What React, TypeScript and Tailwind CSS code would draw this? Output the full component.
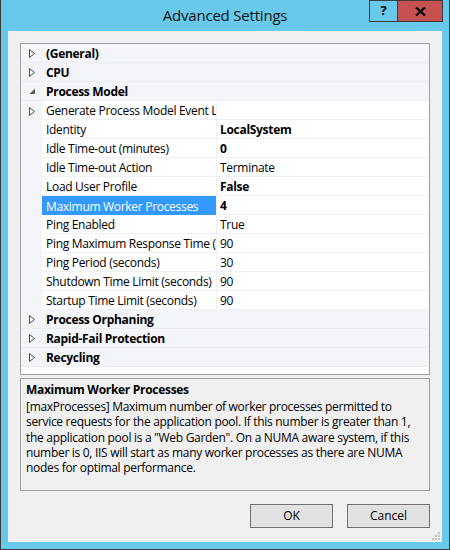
const FONT = { fontFamily: '"Open Sans", "Noto Sans", sans-serif' }

type Row =
  | { kind: 'cat'; label: string; open?: boolean }
  | { kind: 'prop'; label: string; value: string; bold?: boolean; selected?: boolean; expander?: boolean }

const ROWS: Row[] = [
  { kind: 'cat', label: '(General)' },
  { kind: 'cat', label: 'CPU' },
  { kind: 'cat', label: 'Process Model', open: true },
  { kind: 'prop', label: 'Generate Process Model Event Log Entry', value: '', expander: true },
  { kind: 'prop', label: 'Identity', value: 'LocalSystem', bold: true },
  { kind: 'prop', label: 'Idle Time-out (minutes)', value: '0', bold: true },
  { kind: 'prop', label: 'Idle Time-out Action', value: 'Terminate' },
  { kind: 'prop', label: 'Load User Profile', value: 'False', bold: true },
  { kind: 'prop', label: 'Maximum Worker Processes', value: '4', bold: true, selected: true },
  { kind: 'prop', label: 'Ping Enabled', value: 'True' },
  { kind: 'prop', label: 'Ping Maximum Response Time (seconds)', value: '90' },
  { kind: 'prop', label: 'Ping Period (seconds)', value: '30' },
  { kind: 'prop', label: 'Shutdown Time Limit (seconds)', value: '90' },
  { kind: 'prop', label: 'Startup Time Limit (seconds)', value: '90' },
  { kind: 'cat', label: 'Process Orphaning' },
  { kind: 'cat', label: 'Rapid-Fail Protection' },
  { kind: 'cat', label: 'Recycling' },
]

function Collapsed() {
  return (
    <svg width="6" height="9" viewBox="0 0 6 9">
      <path d="M0.5 0.5 L5.5 4.5 L0.5 8.5 Z" fill="none" stroke="#4a4a4a" strokeWidth="1" />
    </svg>
  )
}

function Expanded() {
  return (
    <svg width="7" height="7" viewBox="0 0 7 7">
      <path d="M6 0.5 L6 6 L0.5 6 Z" fill="#5a5a5a" />
    </svg>
  )
}

function GridRow({ row }: { row: Row }) {
  if (row.kind === 'cat') {
    return (
      <div className="flex h-[19px] border-b border-[#eaedf2] bg-[#f3f5f9]">
        <div className="w-[21px] flex items-center justify-center pl-[1px] pt-[1px]">
          {row.open ? <Expanded /> : <Collapsed />}
        </div>
        <div className="pl-[4px] pt-[2px] flex items-center text-[12px] font-bold text-black leading-none tracking-[-0.3px]">
          {row.label}
        </div>
      </div>
    )
  }
  return (
    <div className="flex h-[19px]">
      <div className="w-[21px] shrink-0 bg-[#f3f5f9] flex items-center justify-center pl-[1px] pt-[1px]">
        {row.expander && <Collapsed />}
      </div>
      <div
        className={
          row.selected
            ? 'w-[174px] shrink-0 overflow-hidden whitespace-nowrap bg-[#3399ff] text-white pl-[4px] pt-[2px] flex items-center text-[12px] leading-none tracking-[-0.3px]'
            : 'w-[174px] shrink-0 overflow-hidden whitespace-nowrap bg-white text-black border-b border-[#eef1f6] pl-[4px] pt-[2px] flex items-center text-[12px] leading-none tracking-[-0.3px]'
        }
      >
        {row.label}
      </div>
      <div className="w-[1px] shrink-0 bg-[#eef1f6]" />
      <div
        className={
          row.bold
            ? 'flex-1 bg-white border-b border-[#eef1f6] pl-[3px] pt-[2px] flex items-center text-[12px] font-bold text-black leading-none tracking-[-0.3px]'
            : 'flex-1 bg-white border-b border-[#eef1f6] pl-[3px] pt-[2px] flex items-center text-[12px] text-black leading-none tracking-[-0.3px]'
        }
      >
        {row.value}
      </div>
    </div>
  )
}

export default function App() {
  return (
    <div style={FONT} className="w-[450px] h-[550px] bg-[#68c9ea] border-x border-b border-[#3a3a3a] flex flex-col relative">
      {/* Title bar */}
      <div className="h-[31px] shrink-0 flex items-center justify-center">
        <span className="text-[15px] text-[#111] tracking-[-0.2px]">Advanced Settings</span>
      </div>
      <div className="absolute top-0 right-[6px] flex h-[22px]">
        <div className="w-[29px] border border-[#3c3c3c] flex items-center justify-center text-[13px] font-bold text-black">?</div>
        <div className="w-[46px] -ml-[1px] border border-[#3c3c3c] bg-[#c75050] flex items-center justify-center">
          <svg width="11" height="9" viewBox="0 0 11 9">
            <path d="M1 0.5 L10 8.5 M10 0.5 L1 8.5" stroke="#000" strokeWidth="2.2" />
          </svg>
        </div>
      </div>

      {/* Client area */}
      <div className="mx-[7px] mb-[7px] flex-1 bg-[#f0f0f0] flex flex-col px-[12px] pt-[12px] relative">
        <div className="h-[332px] border border-[#a0a0a0] bg-white flex flex-col">
          {ROWS.map((r, i) => (
            <GridRow key={i} row={r} />
          ))}
        </div>

        <div className="mt-[3px] h-[113px] border border-[#a0a0a0] bg-[#f0f0f0] pl-[5px] pr-[4px] pt-[2px]">
          <div className="text-[12px] font-bold text-black leading-[18px] tracking-[-0.3px]">Maximum Worker Processes</div>
          <p className="text-[12px] text-black leading-[15.3px] tracking-[-0.3px]">
            [maxProcesses] Maximum number of worker processes permitted to service requests for the application pool. If
            this number is greater than 1, the application pool is a "Web Garden". On a NUMA aware system, if this number
            is 0, IIS will start as many worker processes as there are NUMA nodes for optimal performance.
          </p>
        </div>

        <div className="mt-[13px] flex justify-end gap-[14px]">
          <button className="w-[83px] h-[24px] bg-[#e1e1e1] border border-[#707070] text-[12px] text-black">OK</button>
          <button className="w-[83px] h-[24px] bg-[#e1e1e1] border border-[#707070] text-[12px] text-black">Cancel</button>
        </div>

        <svg className="absolute right-[1px] bottom-[1px]" width="10" height="10" viewBox="0 0 10 10">
          <rect x="7" y="1" width="2" height="2" fill="#c4c4c4" />
          <rect x="4" y="4" width="2" height="2" fill="#c4c4c4" />
          <rect x="7" y="4" width="2" height="2" fill="#c4c4c4" />
          <rect x="1" y="7" width="2" height="2" fill="#c4c4c4" />
          <rect x="4" y="7" width="2" height="2" fill="#c4c4c4" />
          <rect x="7" y="7" width="2" height="2" fill="#c4c4c4" />
        </svg>
      </div>
    </div>
  )
}
